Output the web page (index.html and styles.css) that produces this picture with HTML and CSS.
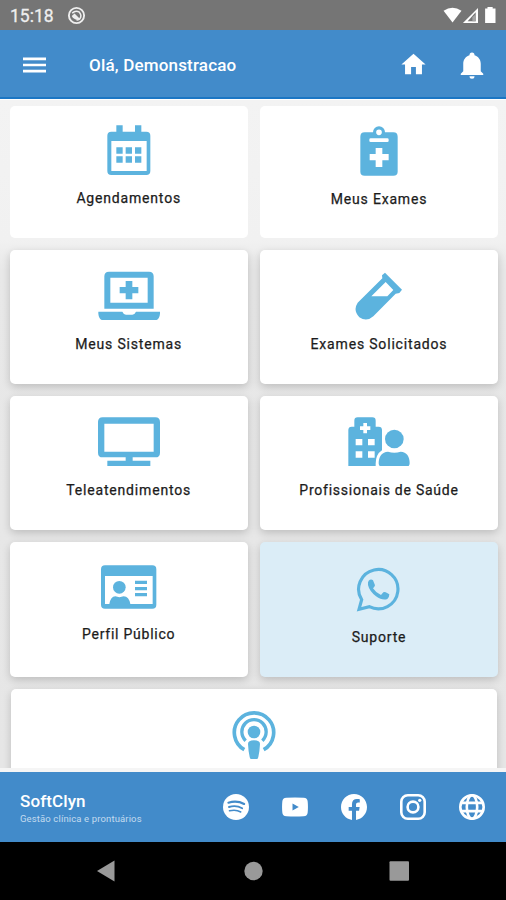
FILE: index.html
```html
<!DOCTYPE html>
<html lang="pt-BR">
<head>
<meta charset="utf-8">
<title>SoftClyn</title>
<link rel="stylesheet" href="styles.css">
</head>
<body>
<div class="status">
  <span class="clock">15:18</span>
  <svg class="dnd" viewBox="0 0 20 20"><circle cx="10" cy="10" r="8" fill="none" stroke="#eee" stroke-width="2"/><path d="M5.500 7.500Q9 4 13 6.500Q16 10 13.500 13.500Q12 15 10 14.500" fill="none" stroke="#eee" stroke-width="1.600"/><path d="M5 10.500L8 8L14 14Q8 16 5 10.500Z" fill="#eee"/></svg>
  <svg class="signals" viewBox="0 0 56 18"><path d="M0 4Q9.500-2.500 19 4L9.500 16.500Z" fill="#fff"/><path d="M36.500 1V17H20.500Z" fill="#fff"/><path d="M34 5.500V15H25.500Z" fill="#757575"/><path d="M30.500 10.500V15H34V8Z" fill="#a5a5a5"/><path d="M46.500 1.500V0H52V1.500H55V17H44V1.500Z" fill="#fff"/></svg>
</div>
<header class="header">
  <svg class="menu" viewBox="0 0 23 16"><path d="M0 1.800H23M0 8H23M0 14.200H23" stroke="#fff" stroke-width="2.700"/></svg>
  <h1 class="title">Olá, Demonstracao</h1>
  <svg class="home" viewBox="0 0 24 24" fill="#fff"><path d="M10 20V14H14V20H19V12H22L12 3L2 12H5V20H10Z"/></svg>
  <svg class="bell" viewBox="0 0 24 24" fill="#fff"><path d="M21 19V20H3V19L5 17V11C5 7.900 7.030 5.170 10 4.290V4A2 2 0 0 1 14 4V4.290C16.970 5.170 19 7.900 19 11V17L21 19M14 21A2 2 0 0 1 10 21"/></svg>
</header>
<main class="content">
  <div class="grid">
    <div class="card card-flat">
      <svg class="icon" viewBox="290 75 192 168"><path fill-rule="evenodd" d="M348 91H367V110H404V91H423V110H438Q450 110 450 122V228Q450 240 438 240H333Q321 240 321 228V122Q321 110 333 110H348ZM333 138V228H439V138Z"/><path d="M348 157h19v19h-19zM376 157h19v19h-19zM404 157h19v19h-19zM348 184h19v19h-19zM376 184h19v19h-19zM404 184h19v19h-19z"/></svg>
      <span class="label label-up">Agendamentos</span>
    </div>
    <div class="card card-flat">
      <svg class="icon" viewBox="281 75 192 168"><path fill-rule="evenodd" d="M334 112H359A18 18 0 0 1 395 112H420Q433 112 433 125V230Q433 242 420 242H334Q321 242 321 230V125Q321 112 334 112ZM377 103.500A8.500 8.500 0 1 0 377 120.500A8.500 8.500 0 1 0 377 103.500ZM352 130Q348 130 348 134V137Q348 141 352 141H402Q406 141 406 137V134Q406 130 402 130ZM367 159V177H349V196H367V216H387V196H406V177H387V159Z"/></svg>
      <span class="label">Meus Exames</span>
    </div>
    <div class="card">
      <svg class="icon" viewBox="290 73 192 168"><path fill-rule="evenodd" d="M326 96H446Q460 96 460 110V207H312V110Q312 96 326 96ZM330 114V189H442V114Z"/><path d="M376 124H396V142H414V161H396V179H376V161H358V142H376ZM294 216H366Q370 225 377 225H396Q403 225 407 216H479V222Q477 243 459 243H314Q296 243 294 222Z"/></svg>
      <span class="label label-down">Meus Sistemas</span>
    </div>
    <div class="card">
      <svg class="icon" viewBox="281 73 192 168"><path fill-rule="evenodd" d="M395 99L446 150L438 160L427 162L360 230Q340 248 318 233Q298 212 313 189L387 116L386 107ZM397 127L354 170H402L420 151Z"/></svg>
      <span class="label label-down">Exames Solicitados</span>
    </div>
    <div class="card">
      <svg class="icon" viewBox="290 60 192 168"><path fill-rule="evenodd" d="M307 82H465Q479 82 479 96V188Q479 202 465 202H397V212H450V230H321V212H376V202H307Q293 202 293 188V96Q293 82 307 82ZM312 101V185H460V101Z"/></svg>
      <span class="label label-down">Teleatendimentos</span>
    </div>
    <div class="card">
      <svg class="icon" viewBox="281 60 192 168"><path fill-rule="evenodd" d="M303 110V92Q303 82 313 82H357Q367 82 367 92V110H376Q386 110 386 120V181Q367 193 367 221V230H285V120Q285 110 295 110ZM330 99V109H320V120H330V130H341V120H351V109H341V99ZM307 147V166H327V147ZM344 147V166H364V147ZM307 184V203H327V184ZM344 184V203H364V184Z"/><circle cx="423" cy="147" r="28"/><path d="M404 185Q423 191 442 185C460 185 469 200 469 220Q469 230 459 230H386Q376 230 376 220C376 200 386 185 404 185Z"/></svg>
      <span class="label label-down label-tight">Profissionais de Saúde</span>
    </div>
    <div class="card">
      <svg class="icon" viewBox="290 63 192 168"><path fill-rule="evenodd" d="M314 91H456Q468 91 468 103V209Q468 221 456 221H314Q302 221 302 209V103Q302 91 314 91ZM314 123V207H327Q331 185 345 184Q357 189 370 184Q386 185 390 207H457V123Z"/><circle cx="357" cy="157" r="19"/><path d="M404 137H440V147H404ZM404 156H440V166H404ZM404 174H440V184H404Z"/></svg>
      <span class="label label-up label-tight">Perfil Público</span>
    </div>
    <div class="card card-active">
      <svg class="icon" viewBox="281 63 192 168"><path d="M317 223L325 194A59 59 0 1 1 348 215Z" fill="none" stroke="#5cb3de" stroke-width="9.500"/><path d="M346 137Q353 131 359 136L365 151Q364 155 359 160Q367 173 383 180L390 172Q393 170 397 172L408 178Q408 187 402 192Q388 198 368 184Q348 168 344 150Q343 141 346 137Z"/></svg>
      <span class="label label-low">Suporte</span>
    </div>
    <div class="card card-wide">
      <svg class="icon" viewBox="65 69 192 168"><path d="M132 209A59 59 0 1 1 190 209" fill="none" stroke="#5cb3de" stroke-width="11"/><path d="M136 182A36.500 36.500 0 1 1 186 182" fill="none" stroke="#5cb3de" stroke-width="10"/><circle cx="161" cy="156" r="19"/><path d="M143 192Q143 181 161 181Q179 181 179 192Q178 214 174 231Q172 240 161 240Q150 240 148 231Q144 214 143 192Z"/></svg>
    </div>
  </div>
</main>
<footer class="footer">
  <div class="brand">
    <strong class="brand-name">SoftClyn</strong>
    <span class="brand-sub">Gestão clínica e prontuários</span>
  </div>
  <div class="social">
    <svg viewBox="0 0 24 24"><circle cx="12" cy="12" r="12" fill="#fff"/><g fill="none" stroke="#428bca" stroke-linecap="round"><path d="M5 8Q13 5.700 19.500 9.200" stroke-width="2"/><path d="M5.500 12Q12 10 17.700 13.100" stroke-width="1.700"/><path d="M6 15.500Q12 14 16.400 16.600" stroke-width="1.400"/></g></svg>
    <svg viewBox="0 0 24 24"><path fill="#fff" fill-rule="evenodd" d="M4 3.500Q12 3 20 3.500Q23.500 3.800 23.700 7Q24.200 12 23.700 17Q23.500 20.200 20 20.500Q12 21 4 20.500Q.500 20.200.300 17Q-.200 12 .300 7Q.500 3.800 4 3.500ZM9.700 8.700V15.300L15.500 12Z"/></svg>
    <svg viewBox="0 0 24 24"><path fill="#fff" d="M24 12.070C24 5.400 18.630 0 12 0S0 5.400 0 12.070C0 18.100 4.390 23.100 10.130 24V15.560H7.080V12.070H10.130V9.410C10.130 6.390 11.920 4.720 14.660 4.720C15.970 4.720 17.340 4.950 17.340 4.950V7.920H15.830C14.340 7.920 13.870 8.850 13.870 9.800V12.070H17.200L16.670 15.560H13.870V24C19.610 23.100 24 18.100 24 12.070Z"/></svg>
    <svg viewBox="0 0 24 24" fill="none" stroke="#fff"><rect x="1.200" y="1.200" width="21.600" height="21.600" rx="6" stroke-width="2.400"/><circle cx="12" cy="12" r="5" stroke-width="2.400"/><circle cx="18.200" cy="5.800" r="1.500" fill="#fff" stroke="none"/></svg>
    <svg viewBox="0 0 24 24" fill="none" stroke="#fff" stroke-width="2.400"><circle cx="12" cy="12" r="10.800"/><ellipse cx="12" cy="12" rx="4.800" ry="10.800"/><path d="M2 8.200H22M2 15.800H22"/></svg>
  </div>
</footer>
<nav class="navbar">
  <svg viewBox="0 0 20 22"><path d="M0 11L17.500.500V21.500Z" fill="#999"/></svg>
  <svg viewBox="0 0 20 22"><circle cx="10.500" cy="11" r="9.200" fill="#999"/></svg>
  <svg viewBox="0 0 20 22"><rect x=".500" y="1.300" width="19.500" height="19.400" rx="1" fill="#999"/></svg>
</nav>
</body>
</html>
```
FILE: styles.css
```css
* { box-sizing: border-box; }
body {
  margin: 0;
  width: 506px;
  height: 900px;
  overflow: hidden;
  display: flex;
  flex-direction: column;
  font-family: Roboto, "Liberation Sans", sans-serif;
  background: #000;
}
svg { display: block; flex: none; }
.status {
  height: 30px;
  flex: none;
  display: flex;
  align-items: center;
  padding: 1px 8px 0 10px;
  background: #757575;
  color: #eee;
}
.clock { width: 57px; font-size: 17.500px; line-height: 28px; -webkit-text-stroke: .3px #eee; }
.dnd { width: 19px; height: 19px; }
.signals { width: 56px; height: 17px; margin-left: auto; }
.header {
  height: 69px;
  flex: none;
  display: flex;
  align-items: center;
  padding: 2px 19px 0 23px;
  background: #428bca;
  border-bottom: 2px solid #1b76c4;
}
.menu { width: 23px; height: 16px; }
.title {
  margin: 1px 0 0 43px;
  font-size: 17px;
  font-weight: 500;
  line-height: 24px;
  letter-spacing: .18px;
  color: #fff;
  white-space: nowrap;
}
.home { width: 29px; height: 29px; margin-left: auto; }
.bell { width: 30px; height: 30px; margin-left: 29px; }
.content {
  height: 673px;
  flex: none;
  overflow: hidden;
  padding: 6px 8px 0 9.700px;
  background: linear-gradient(#f3f3f3, #f1f1f1 140px, #e8e8e8 170px, #e6e6e6);
  border-top: 1px solid #fff;
  border-bottom: 4px solid #f5f5f5;
}
.grid {
  display: grid;
  grid-template-columns: 238px 238px;
  grid-template-rows: 132px 134px 134px 135px 136px;
  gap: 12px 12.300px;
}
.card {
  display: flex;
  flex-direction: column;
  align-items: center;
  padding-top: 14px;
  border-radius: 5px;
  background: #fff;
  box-shadow: 0 3px 8px rgba(0, 0, 0, .18);
}
.card-flat { box-shadow: none; }
.card-active { background: #dbedf7; }
.card-wide { grid-column: 1 / 3; margin: 0 1px; }
.icon { width: 64px; height: 56px; fill: #5cb3de; }
.label {
  margin-top: 13px;
  font-size: 14px;
  line-height: 20px;
  letter-spacing: .82px;
  color: #1c1c1c;
  -webkit-text-stroke: .25px #1c1c1c;
  white-space: nowrap;
}
.label-up { margin-top: 12px; }
.label-down { margin-top: 14px; }
.label-low { margin-top: 15px; }
.label-tight { letter-spacing: .75px; }
.footer {
  height: 70px;
  flex: none;
  display: flex;
  align-items: center;
  justify-content: space-between;
  padding: 0 21px 0 20px;
  background: #428bca;
}
.brand { display: flex; flex-direction: column; color: #fff; }
.brand-name { font-size: 17px; font-weight: 500; line-height: 20px; margin-top: 2px; letter-spacing: .1px; }
.brand-sub { font-size: 9.500px; line-height: 14px; margin-top: 1px; letter-spacing: .13px; color: #c3dbef; white-space: nowrap; }
.social { display: flex; gap: 33px; }
.social svg { width: 26px; height: 26px; }
.navbar {
  height: 58px;
  flex: none;
  display: flex;
  align-items: center;
  gap: 126px;
  padding-left: 96.500px;
}
.navbar svg { width: 20px; height: 22px; }
```
